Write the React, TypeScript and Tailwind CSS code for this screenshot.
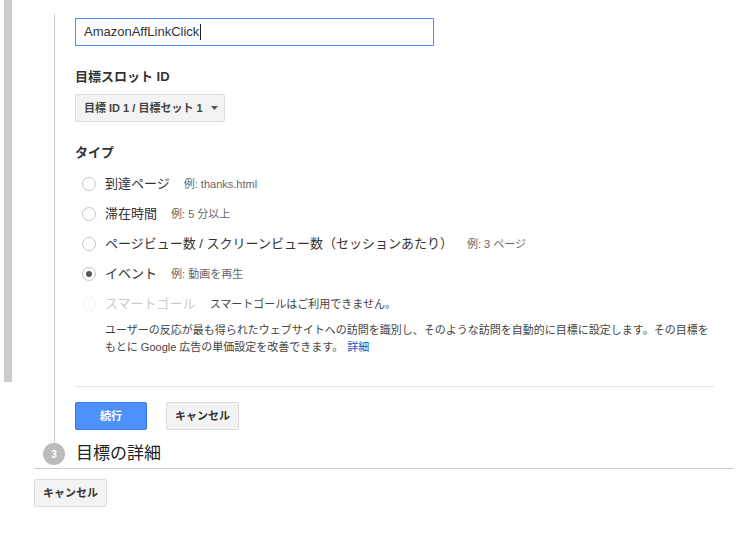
import React from 'react';

const font = { fontFamily: '"Liberation Sans", "Noto Sans CJK JP", sans-serif' };

const Radio: React.FC<{ checked?: boolean; disabled?: boolean }> = ({ checked, disabled }) => (
  <span
    className={`flex h-[14px] w-[14px] shrink-0 items-center justify-center rounded-full border bg-white ${
      disabled ? 'border-[#eeeeee]' : 'border-[#c6c6c6]'
    }`}
  >
    {checked && <span className="h-[6px] w-[6px] rounded-full bg-[#555555]" />}
  </span>
);

const GrayButton: React.FC<{ label: string }> = ({ label }) => (
  <button className="h-[28px] rounded-[2px] border border-[#dcdcdc] bg-[#f3f3f3] px-[8px] text-[11px] font-bold text-[#333333]">
    {label}
  </button>
);

const App: React.FC = () => {
  const types = [
    { label: '到達ページ', example: '例: thanks.html' },
    { label: '滞在時間', example: '例: 5 分以上' },
    { label: 'ページビュー数 / スクリーンビュー数（セッションあたり）', example: '例: 3 ページ' },
    { label: 'イベント', example: '例: 動画を再生', checked: true },
  ];

  return (
    <div className="flex h-[539px] w-[744px] overflow-hidden bg-white text-[#333333]" style={font}>
      <div className="ml-[4px] h-[382px] w-[8px] shrink-0 bg-[#cccccc]" />

      <div className="flex w-[700px] flex-col pl-[22px]">
        {/* step 2 body */}
        <div className="ml-[20px] mt-[14px] border-l border-[#cccccc] pb-[13px] pl-[20px] pt-[4px]">
          <div className="flex h-[28px] w-[359px] items-center border border-[#4d90fe] px-[8px] text-[13px] text-[#333333]">
            AmazonAffLinkClick<span className="ml-px h-[16px] w-px bg-[#222222]" />
          </div>

          <div className="mt-[23px] text-[13px] font-bold leading-[16px] text-[#333333]">目標スロット ID</div>
          <button className="mt-[9px] flex h-[28px] w-[150px] items-center rounded-[2px] border border-[#dcdcdc] bg-[#f3f3f3] pl-[8px] text-[11px] font-bold text-[#444444]">
            目標 ID 1 / 目標セット 1
            <svg className="ml-[8px]" width="7" height="4" viewBox="0 0 7 4">
              <path d="M0 0h7L3.5 4z" fill="#555555" />
            </svg>
          </button>

          <div className="mt-[23px] text-[13px] font-bold leading-[16px] text-[#333333]">タイプ</div>

          <div className="mt-[15px] flex flex-col gap-[14px] pl-[7px]">
            {types.map((t) => (
              <div key={t.label} className="flex h-[16px] items-center">
                <Radio checked={t.checked} />
                <span className="ml-[9px] text-[13px] text-[#333333]">{t.label}</span>
                <span className="ml-[14px] text-[11px] text-[#666666]">{t.example}</span>
              </div>
            ))}
            <div>
              <div className="flex h-[16px] items-center">
                <Radio disabled />
                <span className="ml-[9px] text-[13px] text-[#cccccc]">スマートゴール</span>
                <span className="ml-[14px] text-[11px] text-[#444444]">スマートゴールはご利用できません。</span>
              </div>
              <p className="mt-[10px] w-[636px] pl-[23px] text-[11px] leading-[17px] text-[#444444]">
                ユーザーの反応が最も得られたウェブサイトへの訪問を識別し、そのような訪問を自動的に目標に設定します。その目標をもとに Google 広告の単価設定を改善できます。
                <span className="ml-[4px] text-[#1155cc]">詳細</span>
              </p>
            </div>
          </div>

          <div className="mt-[30px] h-px w-[639px] bg-[#e5e5e5]" />

          <div className="mt-[15px] flex gap-[19px]">
            <button className="h-[28px] w-[72px] rounded-[2px] border border-[#3079ed] bg-[#4d90fe] text-[11px] font-bold text-white">
              続行
            </button>
            <GrayButton label="キャンセル" />
          </div>
        </div>

        {/* step 3 header */}
        <div className="flex items-center">
          <span className="ml-[9px] flex h-[22px] w-[22px] items-center justify-center rounded-full bg-[#bbbbbb] text-[10px] font-bold text-white">
            3
          </span>
          <span className="ml-[11px] text-[17px] leading-[22px] text-[#222222]">目標の詳細</span>
        </div>

        <div className="mt-[3px] h-px w-[700px] bg-[#cccccc]" />

        <div className="mt-[10px]">
          <GrayButton label="キャンセル" />
        </div>
      </div>
    </div>
  );
};

export default App;
